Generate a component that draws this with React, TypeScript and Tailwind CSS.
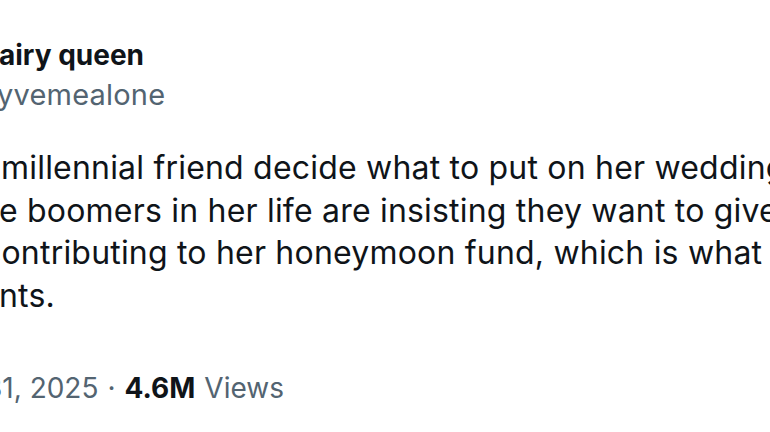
const lines = [
  { text: "millennial friend decide what to put on her wedding registry", ml: "ml-px" },
  { text: "e boomers in her life are insisting they want to give her", ml: "-ml-px" },
  { text: "contributing to her honeymoon fund, which is what she", ml: "-ml-4.25" },
  { text: "nts.", ml: "-ml-px" },
];

export default function App() {
  return (
    <div className="h-[432px] w-[770px] overflow-hidden bg-white font-['Inter',sans-serif] text-[#0f1419]">
      {/* author */}
      <div className="flex flex-col gap-1 pt-[37px]">
        <div className="-ml-px whitespace-nowrap text-[28px] font-bold leading-[36px]">airy queen</div>
        <div className="-ml-0.75 whitespace-nowrap text-[29px] leading-[36px] tracking-[0.2px] text-[#536471]">yvemealone</div>
      </div>

      {/* tweet body */}
      <div className="mt-[34px] flex flex-col text-[32px] leading-[42.7px] tracking-[0.2px]">
        {lines.map((l) => (
          <div key={l.text} className={`${l.ml} whitespace-nowrap`}>
            {l.text}
          </div>
        ))}
      </div>

      {/* meta */}
      <div className="mt-[52px] -ml-3.75 flex items-center whitespace-nowrap text-[28px] leading-[36px] text-[#536471]">
        <span>31, 2025</span>
        <span className="px-[9px]">·</span>
        <span className="font-bold text-[#0f1419]">4.6M</span>
        <span className="ml-[9px]">Views</span>
      </div>
    </div>
  );
}
